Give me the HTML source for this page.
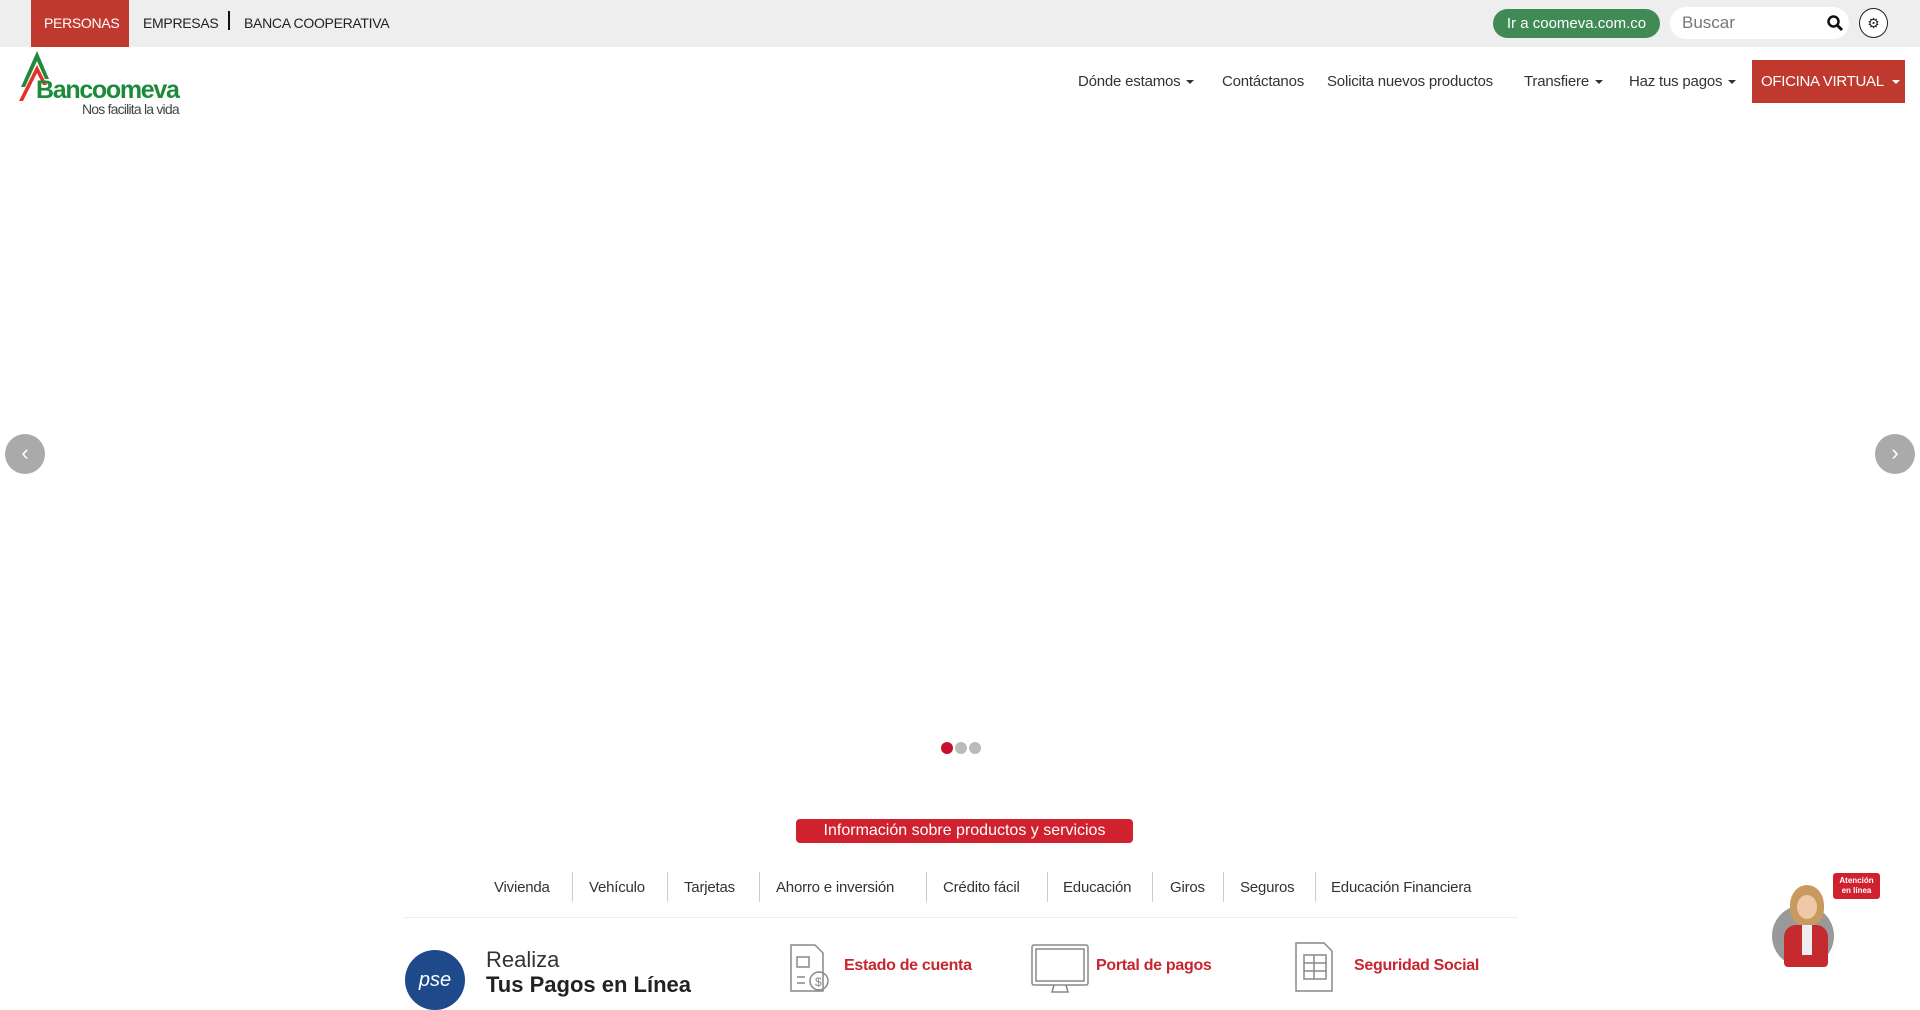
<!DOCTYPE html>
<html><head><meta charset="utf-8"><style>
*{margin:0;padding:0;box-sizing:border-box}
body{width:1920px;height:993px;overflow:hidden;background:#fff;font-family:"Liberation Sans",sans-serif;color:#333;position:relative}
.abs{position:absolute}
.top{position:absolute;left:0;top:0;width:1920px;height:47px;background:#eee}
.tl{position:absolute;top:0;height:47px;line-height:47px;font-size:14px;color:#222;letter-spacing:-0.3px}
.nav{position:absolute;top:73px;font-size:15px;color:#333;white-space:nowrap;letter-spacing:-0.2px}
.car{display:inline-block;width:0;height:0;border-left:4px solid transparent;border-right:4px solid transparent;border-top:4px solid #333;vertical-align:middle;margin-left:6px}
.cat{position:absolute;top:879px;font-size:15px;color:#333;white-space:nowrap;letter-spacing:-0.2px}
.sep{position:absolute;top:872px;width:1px;height:30px;background:#ccc}
.lnk{position:absolute;top:957px;font-size:16px;font-weight:bold;color:#c8262e;letter-spacing:-0.3px}
</style></head><body>
<div class="top"></div>
<div class="abs" style="left:31px;top:0;width:98px;height:47px;background:#c0392f"></div>
<div class="tl" style="left:44px;color:#fff">PERSONAS</div>
<div class="tl" style="left:143px">EMPRESAS</div>
<div class="abs" style="left:228px;top:11px;width:2px;height:19px;background:#111"></div>
<div class="tl" style="left:244px">BANCA COOPERATIVA</div>
<div class="abs" style="left:1493px;top:9px;width:167px;height:29px;border-radius:15px;background:#3f8a55;color:#fff;font-size:15px;line-height:29px;text-align:center">Ir a coomeva.com.co</div>
<div class="abs" style="left:1670px;top:7px;width:179px;height:32px;border-radius:16px;background:#fff;font-size:17px;line-height:32px;padding-left:12px;color:#777">Buscar</div>
<svg class="abs" style="left:1826px;top:14px" width="18" height="18" viewBox="0 0 18 18"><circle cx="7.5" cy="7.5" r="5" fill="none" stroke="#111" stroke-width="2.5"/><line x1="11" y1="11" x2="16" y2="16" stroke="#111" stroke-width="3"/></svg>
<div class="abs" style="left:1859px;top:8px;width:29px;height:30px;border-radius:50%;border:1px solid #222;background:#fff;text-align:center;line-height:28px;font-size:14px;color:#222">⚙</div>

<svg class="abs" style="left:17px;top:51px" width="40" height="50" viewBox="0 0 40 50"><path d="M20 0 L4 36 L8 36 L20 10 L28 28 L32 28Z" fill="#1f8a3b"/><path d="M20 14 L2 50 L6 50 L20 22 L26 34 L30 34Z" fill="#e63027"/></svg>
<div class="abs" style="left:36px;top:76px;font-size:25px;font-weight:bold;color:#1b8a3a;letter-spacing:-1.3px">Bancoomeva</div>
<div class="abs" style="left:82px;top:101px;font-size:14px;color:#444;letter-spacing:-0.8px">Nos facilita la vida</div>

<div class="nav" style="left:1078px">Dónde estamos<span class="car"></span></div>
<div class="nav" style="left:1222px">Contáctanos</div>
<div class="nav" style="left:1327px">Solicita nuevos productos</div>
<div class="nav" style="left:1524px">Transfiere<span class="car"></span></div>
<div class="nav" style="left:1629px">Haz tus pagos<span class="car"></span></div>
<div class="abs" style="left:1752px;top:60px;width:153px;height:43px;background:#c0392f;color:#fff;font-size:15px;line-height:43px;padding-left:9px;white-space:nowrap;letter-spacing:-0.3px">OFICINA VIRTUAL<span class="car" style="border-top-color:#fff;margin-left:8px"></span></div>

<div class="abs" style="left:5px;top:434px;width:40px;height:40px;border-radius:50%;background:#aaa;color:#fff;text-align:center;line-height:38px;font-size:22px">‹</div>
<div class="abs" style="left:1875px;top:434px;width:40px;height:40px;border-radius:50%;background:#aaa;color:#fff;text-align:center;line-height:38px;font-size:22px">›</div>
<div class="abs" style="left:941px;top:742px;width:12px;height:12px;border-radius:50%;background:#c8102e"></div>
<div class="abs" style="left:955px;top:742px;width:12px;height:12px;border-radius:50%;background:#bbb"></div>
<div class="abs" style="left:969px;top:742px;width:12px;height:12px;border-radius:50%;background:#bbb"></div>

<div class="abs" style="left:796px;top:819px;width:337px;height:24px;border-radius:4px;background:#d0212e;color:#fff;font-size:16px;line-height:24px;text-align:center">Información sobre productos y servicios</div>

<div class="cat" style="left:494px">Vivienda</div><div class="sep" style="left:572px"></div>
<div class="cat" style="left:589px">Vehículo</div><div class="sep" style="left:667px"></div>
<div class="cat" style="left:684px">Tarjetas</div><div class="sep" style="left:759px"></div>
<div class="cat" style="left:776px">Ahorro e inversión</div><div class="sep" style="left:926px"></div>
<div class="cat" style="left:943px">Crédito fácil</div><div class="sep" style="left:1047px"></div>
<div class="cat" style="left:1063px">Educación</div><div class="sep" style="left:1152px"></div>
<div class="cat" style="left:1170px">Giros</div><div class="sep" style="left:1223px"></div>
<div class="cat" style="left:1240px">Seguros</div><div class="sep" style="left:1315px"></div>
<div class="cat" style="left:1331px">Educación Financiera</div>
<div class="abs" style="left:404px;top:917px;width:1114px;height:1px;background:#eee"></div>

<div class="abs" style="left:405px;top:950px;width:60px;height:60px;border-radius:50%;background:#1e4a8c;color:#fff;font-size:20px;font-style:italic;line-height:60px;text-align:center">pse</div>
<div class="abs" style="left:486px;top:947px;font-size:22px;color:#333">Realiza</div>
<div class="abs" style="left:486px;top:972px;font-size:22px;font-weight:bold;color:#222">Tus Pagos en Línea</div>

<svg class="abs" style="left:789px;top:943px" width="45" height="50" viewBox="0 0 45 50" fill="none" stroke="#888" stroke-width="1.5"><path d="M2 2 H26 L34 10 V48 H2Z"/><rect x="8" y="14" width="12" height="10"/><line x1="8" y1="34" x2="16" y2="34"/><line x1="8" y1="40" x2="16" y2="40"/><circle cx="30" cy="38" r="9"/><text x="26" y="43" font-size="12" fill="#888" stroke="none">$</text></svg>
<div class="lnk" style="left:844px">Estado de cuenta</div>
<svg class="abs" style="left:1030px;top:943px" width="60" height="50" viewBox="0 0 60 50" fill="none" stroke="#888" stroke-width="1.5"><rect x="2" y="2" width="56" height="40" rx="2"/><rect x="6" y="6" width="48" height="32"/><path d="M24 42 L22 49 H38 L36 42"/></svg>
<div class="lnk" style="left:1096px">Portal de pagos</div>
<svg class="abs" style="left:1294px;top:941px" width="40" height="52" viewBox="0 0 40 52" fill="none" stroke="#888" stroke-width="1.5"><path d="M2 2 H30 L38 10 V50 H2Z"/><rect x="10" y="14" width="22" height="24"/><line x1="10" y1="22" x2="32" y2="22"/><line x1="10" y1="30" x2="32" y2="30"/><line x1="20" y1="14" x2="20" y2="38"/></svg>
<div class="lnk" style="left:1354px">Seguridad Social</div>

<div class="abs" style="left:1772px;top:905px;width:62px;height:62px;border-radius:50%;background:#999"></div>
<div class="abs" style="left:1790px;top:885px;width:34px;height:40px;border-radius:50% 50% 40% 40%;background:#c99a60"></div>
<div class="abs" style="left:1797px;top:895px;width:20px;height:24px;border-radius:50%;background:#f0c8a8"></div>
<div class="abs" style="left:1784px;top:925px;width:44px;height:42px;border-radius:12px 12px 4px 4px;background:#c42a2e"></div>
<div class="abs" style="left:1802px;top:925px;width:10px;height:30px;background:#eee"></div>
<div class="abs" style="left:1833px;top:873px;width:47px;height:26px;border-radius:3px;background:#d0212e;color:#fff;font-size:8px;font-weight:bold;text-align:center;line-height:10px;padding-top:3px">Atención<br>en línea</div>
</body></html>
